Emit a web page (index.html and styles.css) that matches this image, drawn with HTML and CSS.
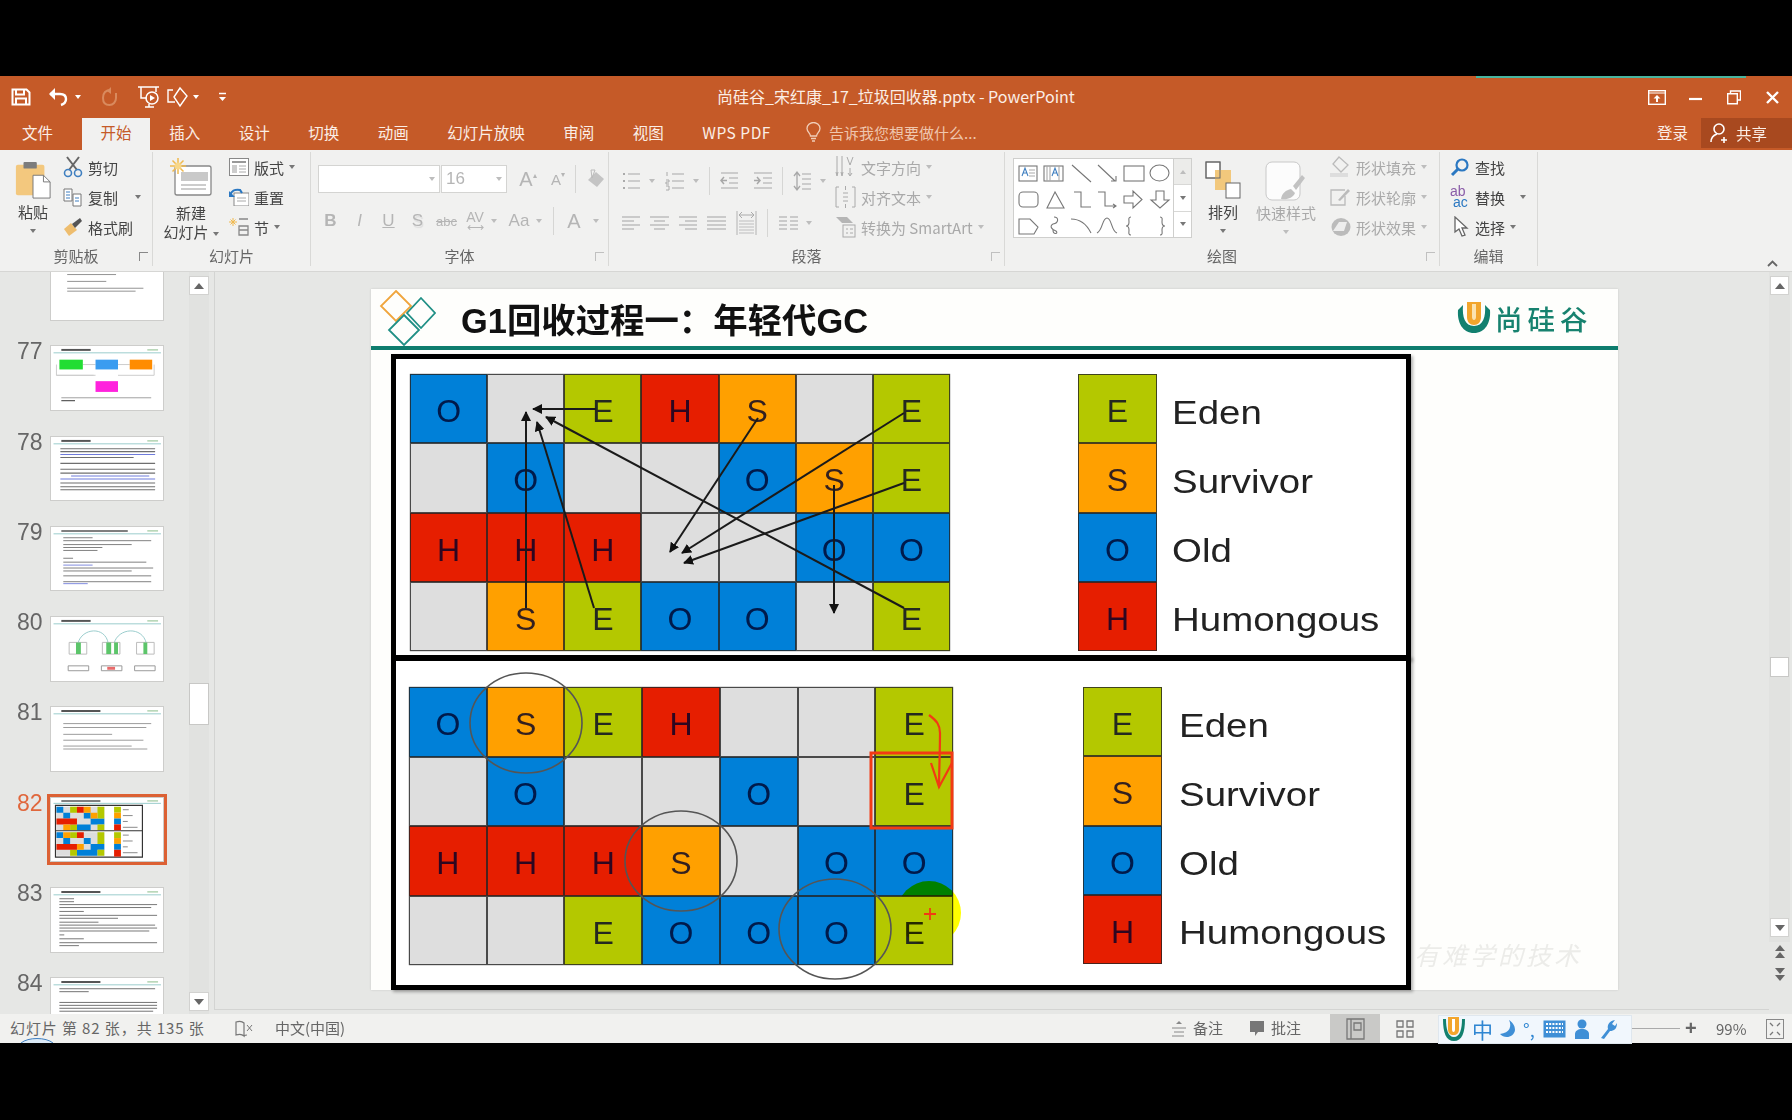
FILE: index.html
```html
<!DOCTYPE html>
<html lang="zh-CN">
<head>
    <meta charset="UTF-8">
    <meta name="viewport" content="width=device-width, initial-scale=1.0">
    <title>尚硅谷_宋红康_17_垃圾回收器.pptx - PowerPoint</title>
    <link rel="stylesheet" href="styles.css">
</head>
<body>
<div class="window">
    <div class="progress"></div>

    <!-- title bar -->
    <header class="titlebar">
        <div class="qat">
            <svg width="20" height="18" viewBox="0 0 20 18" class="q-save"><path d="M1.5 1.5h14l3 3v12h-17z M5 1.5v5h8v-5 M5 16.5v-6h10v6" fill="none" stroke="#fff" stroke-width="2"/></svg>
            <svg width="21" height="20" viewBox="0 0 21 20" class="q-undo"><path d="M2 7h10c4 0 6 2 6 5s-2 5-5 6" fill="none" stroke="#fff" stroke-width="2.4"/><path d="M7 1L1 7l6 6z" fill="#fff"/></svg>
            <i class="caret white"></i>
            <svg width="17" height="20" viewBox="0 0 17 20" class="q-redo"><path d="M10 3C5 3 2 6 2 11s3 7 6.500 7 6.500-3 6.500-7V6" fill="none" stroke="#d98a5e" stroke-width="2"/><path d="M10 0v7l-4-3z" fill="#d98a5e"/></svg>
            <svg width="23" height="24" viewBox="0 0 23 24" class="q-show"><path d="M1 2h21M4 2v11h6M19 2v5M8 22h9M12 19v3" fill="none" stroke="#fff" stroke-width="1.500"/><circle cx="15" cy="13" r="6" fill="none" stroke="#fff" stroke-width="1.500"/><path d="M13 10l5 3-5 3z" fill="#fff"/></svg>
            <svg width="21" height="22" viewBox="0 0 21 22" class="q-shape"><path d="M6 4H1v12h7 M7 11l6-9 7 8-7 10z" fill="none" stroke="#fff" stroke-width="1.400"/></svg>
            <i class="caret white"></i>
            <svg width="9" height="11" viewBox="0 0 9 11" class="q-more"><path d="M1 1.500h7" stroke="#fff" stroke-width="1.500"/><path d="M1 5h7L4.500 9z" fill="#fff"/></svg>
        </div>
        <div class="doc-title">尚硅谷_宋红康_17_垃圾回收器.pptx - PowerPoint</div>
        <div class="winctl">
            <svg width="18" height="15" viewBox="0 0 18 15"><rect x=".7" y=".7" width="16.600" height="13.600" fill="none" stroke="#fff" stroke-width="1.400"/><path d="M1 3h16" stroke="#fff"/><path d="M9 5l3.500 3.500H10V12H8V8.500H5.500z" fill="#fff"/></svg>
            <svg width="13" height="15" viewBox="0 0 13 15" class="w-min"><path d="M0 9h13" stroke="#fff" stroke-width="2.200"/></svg>
            <svg width="14" height="15" viewBox="0 0 14 15" class="w-max"><path d="M3.500 3V1h10v9h-3 M.7 3.700h9.600v10H.7z" fill="none" stroke="#fff" stroke-width="1.400"/></svg>
            <svg width="13" height="13" viewBox="0 0 13 13" class="w-close"><path d="M1 1l11 11M12 1L1 12" stroke="#fff" stroke-width="2.400"/></svg>
        </div>
    </header>

    <!-- tabs -->
    <nav class="tabs">
        <a class="tab tab-file">文件</a>
        <a class="tab active">开始</a>
        <a class="tab">插入</a>
        <a class="tab">设计</a>
        <a class="tab">切换</a>
        <a class="tab">动画</a>
        <a class="tab">幻灯片放映</a>
        <a class="tab">审阅</a>
        <a class="tab">视图</a>
        <a class="tab tab-wps">WPS PDF</a>
        <div class="tellme">
            <svg width="15" height="20" viewBox="0 0 15 20"><path d="M4.500 14c0-3-3.500-4-3.500-7.500a6.500 6 0 0 1 13 0C14 10 10.500 11 10.500 14zM5 16.500h5M6 19h3" fill="none" stroke="#f0cdb8" stroke-width="1.300"/></svg>
            <span>告诉我您想要做什么...</span>
        </div>
        <a class="login">登录</a>
        <a class="share">
            <svg width="20" height="22" viewBox="0 0 20 22"><circle cx="9" cy="7" r="5" fill="none" stroke="#fff" stroke-width="1.600"/><path d="M1 20c0-5 3-7 6-8M14 15v6M11 18h6" fill="none" stroke="#fff" stroke-width="1.600"/></svg>
            <span>共享</span>
        </a>
    </nav>

    <!-- ribbon -->
    <section class="ribbon">
        <div class="rgroup g-clip">
            <div class="rbody">
                <div class="big big-paste">
                    <svg width="38" height="38" viewBox="0 0 38 40"><rect x="1" y="4" width="30" height="32" rx="2" fill="#f3c87e"/><rect x="9" y="1" width="14" height="7" rx="1" fill="#7c7c7c"/><path d="M19 15h11l7 7v17H19z" fill="#fff" stroke="#777"/><path d="M30 15v7h7" fill="none" stroke="#777"/></svg>
                    <span>粘贴</span>
                    <i class="caret"></i>
                </div>
                <div class="smalls">
                    <div class="sm"><svg width="20" height="22" viewBox="0 0 20 22"><path d="M4 1l10 13M16 1L6 14" stroke="#666" stroke-width="2"/><circle cx="5" cy="17" r="3.500" fill="none" stroke="#3f7fc0" stroke-width="1.600"/><circle cx="15" cy="17" r="3.500" fill="none" stroke="#3f7fc0" stroke-width="1.600"/></svg><span>剪切</span></div>
                    <div class="sm"><svg width="20" height="20" viewBox="0 0 20 20"><path d="M1 2h8v12H1z M10 7h8v12h-8z" fill="#fff" stroke="#777"/><path d="M3 5h4M3 8h4M3 11h4M12 11h4M12 14h4" stroke="#3f7fc0"/></svg><span>复制</span><i class="caret sp-copy"></i></div>
                    <div class="sm"><svg width="20" height="20" viewBox="0 0 20 20"><path d="M1 12l7-6 6 7-8 6z" fill="#eebd6e"/><path d="M9 7l8-6 2 3-7 7z" fill="#555"/></svg><span>格式刷</span></div>
                </div>
            </div>
            <div class="rlabel">剪贴板<i class="launcher"></i></div>
        </div>

        <div class="rgroup g-slides">
            <div class="rbody">
                <div class="big big-new">
                    <svg width="42" height="38" viewBox="0 0 42 38"><rect x="5" y="8" width="36" height="29" rx="2" fill="#fff" stroke="#888" stroke-width="1.300"/><rect x="11" y="14" width="27" height="9" fill="#c9c9c9"/><path d="M11 27h25M11 31h25" stroke="#999"/><path d="M8 0v16M0 8h16M2.500 2.500l11 11M13.500 2.500l-11 11" stroke="#f0b94e" stroke-width="1.500"/><circle cx="8" cy="8" r="3.500" fill="#f8d788"/></svg>
                    <span>新建</span>
                    <span>幻灯片<i class="caret inline"></i></span>
                </div>
                <div class="smalls">
                    <div class="sm"><svg width="20" height="18" viewBox="0 0 20 18"><rect x=".5" y=".5" width="19" height="17" fill="#fff" stroke="#888"/><path d="M3 4h14" stroke="#999" stroke-width="2"/><rect x="3" y="7" width="5" height="8" fill="#ccc"/><path d="M10 8h7M10 11h7M10 14h7" stroke="#aaa"/></svg><span>版式</span><i class="caret"></i></div>
                    <div class="sm"><svg width="20" height="18" viewBox="0 0 20 18"><rect x="5" y="5" width="15" height="13" fill="#fff" stroke="#888"/><path d="M8 10h9M8 13h9" stroke="#aaa"/><path d="M1 8C2 3 6 1 11 2l2 3" fill="none" stroke="#2b78c2" stroke-width="2.200"/><path d="M0 3v6h6z" fill="#2b78c2"/></svg><span>重置</span></div>
                    <div class="sm"><svg width="20" height="20" viewBox="0 0 20 20"><path d="M10 2h9M10 9h9v9h-9zM10 13h9" fill="none" stroke="#888" stroke-width="1.300"/><path d="M4 1v8M0 5h8M1.500 2.500l5 5M6.500 2.500l-5 5" stroke="#f0b94e"/></svg><span>节</span><i class="caret"></i></div>
                </div>
            </div>
            <div class="rlabel">幻灯片</div>
        </div>

        <div class="rgroup g-font">
            <div class="rbody column">
                <div class="frow frow-1">
                    <div class="combo c-name"><i class="caret dim"></i></div>
                    <div class="combo c-size"><span>16</span><i class="caret dim"></i></div>
                    <span class="fbtn big-a">A<sup>▴</sup></span>
                    <span class="fbtn small-a">A<sup>▾</sup></span>
                    <i class="vsep"></i>
                    <svg width="19" height="20" viewBox="0 0 19 20" class="eraser"><path d="M2 11l8-8 8 7-7 8z" fill="#c4c4c4"/><path d="M5 1h4L6 9z" fill="none" stroke="#bbb"/></svg>
                </div>
                <div class="frow frow-2">
                    <b class="fbtn w29">B</b>
                    <em class="fbtn w29">I</em>
                    <u class="fbtn w29">U</u>
                    <s class="fbtn w29 shadow-s">S</s>
                    <span class="fbtn w29 abc">abc</span>
                    <span class="fbtn av">AV<i class="arrow-lr">⟷</i></span>
                    <i class="caret dim"></i>
                    <span class="fbtn aa">Aa</span>
                    <i class="caret dim"></i>
                    <i class="vsep"></i>
                    <span class="fbtn big-color">A</span>
                    <i class="caret dim"></i>
                </div>
            </div>
            <div class="rlabel">字体<i class="launcher dim"></i></div>
        </div>

        <div class="rgroup g-para">
            <div class="rbody">
                <div class="para-left">
                    <div class="prow prow-1">
                        <svg width="18" height="20" viewBox="0 0 18 20"><path d="M6 3h12M6 10h12M6 17h12" stroke="#c0c0c0" stroke-width="1.500"/><path d="M1 3h2M1 10h2M1 17h2" stroke="#aaa" stroke-width="2"/></svg><i class="caret dim"></i>
                        <svg width="19" height="20" viewBox="0 0 19 20"><path d="M7 3h12M7 10h12M7 17h12" stroke="#c0c0c0" stroke-width="1.500"/><path d="M2 1v4M1 9h3v2H1v2h3M1 15h3v4H1" fill="none" stroke="#aaa"/></svg><i class="caret dim"></i>
                        <i class="vsep"></i>
                        <svg width="18" height="20" viewBox="0 0 18 20"><path d="M1 2h17M9 7h9M9 12h9M1 17h17" stroke="#c0c0c0" stroke-width="1.500"/><path d="M1 9.500h6M4 6l-3 3.500L4 13" fill="none" stroke="#a8a8a8" stroke-width="1.500"/></svg>
                        <svg width="21" height="20" viewBox="0 0 21 20"><path d="M3 2h18M12 7h9M12 12h9M3 17h18" stroke="#c0c0c0" stroke-width="1.500"/><path d="M3 9.500h6M6 6l3 3.500L6 13" fill="none" stroke="#a8a8a8" stroke-width="1.500"/></svg>
                        <i class="vsep"></i>
                        <svg width="18" height="22" viewBox="0 0 18 22"><path d="M9 4h9M9 9h9M9 14h9M9 19h9" stroke="#c0c0c0" stroke-width="1.500"/><path d="M4 3v17M1 6l3-4 3 4M1 16l3 4 3-4" fill="none" stroke="#a8a8a8" stroke-width="1.300"/></svg><i class="caret dim"></i>
                    </div>
                    <div class="prow prow-2">
                        <svg width="18" height="16" viewBox="0 0 18 16"><path d="M0 2h18M0 6h12M0 10h18M0 14h12" stroke="#bdbdbd" stroke-width="1.500"/></svg>
                        <svg width="19" height="16" viewBox="0 0 19 16"><path d="M0 2h19M4 6h11M0 10h19M4 14h11" stroke="#bdbdbd" stroke-width="1.500"/></svg>
                        <svg width="18" height="16" viewBox="0 0 18 16"><path d="M0 2h18M6 6h12M0 10h18M6 14h12" stroke="#bdbdbd" stroke-width="1.500"/></svg>
                        <svg width="19" height="16" viewBox="0 0 19 16"><path d="M0 2h19M0 6h19M0 10h19M0 14h19" stroke="#bdbdbd" stroke-width="1.500"/></svg>
                        <svg width="21" height="24" viewBox="0 0 21 24"><path d="M1 0v24M20 0v24M3 10h15M3 13h15M3 16h15M3 19h15M3 22h15" stroke="#bdbdbd" stroke-width="1.200"/><path d="M3 4h15M6 1L3 4l3 3M15 1l3 3-3 3" fill="none" stroke="#aaa"/></svg>
                        <i class="vsep"></i>
                        <svg width="19" height="16" viewBox="0 0 19 16"><path d="M0 2h8M11 2h8M0 6h8M11 6h8M0 10h8M11 10h8M0 14h8M11 14h8" stroke="#bdbdbd" stroke-width="1.300"/></svg><i class="caret dim"></i>
                    </div>
                </div>
                <div class="smalls off">
                    <div class="sm"><svg width="21" height="24" viewBox="0 0 21 24"><path d="M2 1v18M7 1v18M1 17l1 4 1-4M6 17l1 4 1-4M12 2l3 8 3-8M15 13v7M13 18l2 3 2-3" fill="none" stroke="#aaa"/></svg><span>文字方向</span><i class="caret dim"></i></div>
                    <div class="sm"><svg width="21" height="24" viewBox="0 0 21 24"><path d="M4 2H1v20h3M17 2h3v20h-3M8 8h5M8 12h5M8 16h5M10.500 1v4M10.500 19v4" fill="none" stroke="#aaa"/></svg><span>对齐文本</span><i class="caret dim"></i></div>
                    <div class="sm"><svg width="21" height="22" viewBox="0 0 21 22"><path d="M1 1h11l6 6H7z" fill="#b5b5b5"/><rect x="8" y="9" width="12" height="12" fill="none" stroke="#aaa"/><path d="M11 13h2M15 13h3M11 17h2M15 17h3" stroke="#aaa"/></svg><span>转换为 SmartArt</span><i class="caret dim"></i></div>
                </div>
            </div>
            <div class="rlabel">段落<i class="launcher dim"></i></div>
        </div>

        <div class="rgroup g-draw">
            <div class="rbody">
                <div class="gallery">
                    <svg width="160" height="78" viewBox="0 0 160 78" fill="none" stroke="#777" stroke-width="1.100">
                        <rect x="5" y="7" width="18" height="15"/><path d="M15 11h6M15 14h6M15 17h6" stroke="#aaa"/>
                        <path d="M8 17l3-8 3 8M9 14h4" stroke="#3f7fc0"/>
                        <rect x="30" y="7" width="19" height="15"/><path d="M33 7v15M36 7v15M45 7v15" stroke="#aaa"/>
                        <path d="M38 17l3-8 3 8M39 14h4" stroke="#3f7fc0"/>
                        <path d="M58 6l19 17M84 6l17 16M97 22h5v-5"/>
                        <rect x="110" y="7" width="20" height="15"/><ellipse cx="145.500" cy="14" rx="9.500" ry="8"/>
                        <rect x="5" y="33" width="19" height="15" rx="4"/><path d="M41 33l-8 16h17z"/>
                        <path d="M60 33h7v15h10M84 33h7v14h10M99 45l3 2-3 2"/>
                        <path d="M110 37h9v-5l9 8.500-9 8.500v-5h-9zM142 32h8v9h5l-9 8-9-8h5z"/>
                        <path d="M5 60h11l8 8-4 7H5zM40 58c5 0 5 6-1 7-4 2-1 6 3 7 3 3-3 4-3-1M57 60c9 0 16 6 20 14M83 74c6-3 5-15 10-15s4 13 10 15"/>
                        <path d="M117 58c-3 0-2 3-2 5 0 3-1 4-3 4 2 0 3 1 3 4 0 2-1 5 2 5M146 58c3 0 2 3 2 5 0 3 1 4 3 4-2 0-3 1-3 4 0 2 1 5-2 5"/>
                    </svg>
                    <div class="gal-scroll">
                        <span class="gs-up"><i class="caret dim up"></i></span>
                        <span><i class="caret"></i></span>
                        <span class="gs-more"><i class="caret"></i></span>
                    </div>
                </div>
                <div class="big big-arrange">
                    <svg width="36" height="38" viewBox="0 0 36 38"><rect x="1" y="1" width="14" height="16" fill="#fff" stroke="#666"/><rect x="10" y="9" width="16" height="20" fill="#f2c87c"/><rect x="1" y="1" width="14" height="16" fill="none" stroke="#666"/><rect x="21" y="22" width="14" height="15" fill="#fff" stroke="#666"/></svg>
                    <span>排列</span>
                    <i class="caret"></i>
                </div>
                <div class="big big-style off">
                    <svg width="42" height="42" viewBox="0 0 42 42"><rect x="1" y="1" width="34" height="38" rx="6" fill="#fcfcfc" stroke="#c8c8c8"/><path d="M16 38c1-6 5-9 10-10l4 4c-2 5-8 7-14 6zM28 25l9-11 3 3-9 12z" fill="#c2c2c2"/></svg>
                    <span>快速样式</span>
                    <i class="caret dim"></i>
                </div>
                <div class="smalls off s-shape">
                    <div class="sm"><svg width="21" height="22" viewBox="0 0 21 22"><path d="M9 1l9 8-7 7-8-8z" fill="none" stroke="#bbb" stroke-width="1.300"/><path d="M0 19h18" stroke="#ddd" stroke-width="4"/></svg><span>形状填充</span><i class="caret dim"></i></div>
                    <div class="sm"><svg width="21" height="20" viewBox="0 0 21 20"><path d="M15 3H1v15h14V9" fill="none" stroke="#bbb" stroke-width="1.300"/><path d="M8 13l10-11 2 2-10 10z" fill="#bbb"/></svg><span>形状轮廓</span><i class="caret dim"></i></div>
                    <div class="sm"><svg width="21" height="20" viewBox="0 0 21 20"><ellipse cx="11" cy="10" rx="9.500" ry="9" fill="#bbb"/><path d="M3 14l6-9h8l-3 9z" fill="#ededed"/></svg><span>形状效果</span><i class="caret dim"></i></div>
                </div>
            </div>
            <div class="rlabel">绘图<i class="launcher dim"></i></div>
        </div>

        <div class="rgroup g-edit">
            <div class="rbody">
                <div class="smalls">
                    <div class="sm"><svg width="20" height="20" viewBox="0 0 20 20"><circle cx="12" cy="8" r="5.500" fill="none" stroke="#2b78c2" stroke-width="2.200"/><path d="M8 12l-6 6" stroke="#2b78c2" stroke-width="3"/></svg><span>查找</span></div>
                    <div class="sm"><span class="abac"><i>ab</i><i>ac</i></span><span>替换</span><i class="caret sp-rep"></i></div>
                    <div class="sm"><svg width="20" height="22" viewBox="0 0 20 22" class="cursor"><path d="M5 1v15l4-3 3 7 3-1-3-7h5z" fill="#fff" stroke="#666" stroke-width="1.300"/></svg><span>选择</span><i class="caret"></i></div>
                </div>
            </div>
            <div class="rlabel">编辑</div>
        </div>
        <svg class="collapse" width="11" height="7" viewBox="0 0 11 7"><path d="M1 6l4.500-4.500L10 6" fill="none" stroke="#666" stroke-width="1.800"/></svg>
    </section>

    <!-- workspace -->
    <div class="workspace">
        <aside class="thumbs">
            <div class="thumb-list">
                <div class="thumb"><span class="num"></span><div class="card">
                    <svg viewBox="0 0 114 65"><path d="M16 3h28M16 12h34M16 19h50M16 26h40M16 33h78M16 36h70" stroke="#333" stroke-width=".9" opacity=".6"/></svg>
                </div></div>
                <div class="thumb"><span class="num">77</span><div class="card">
                    <svg viewBox="0 0 114 65"><path d="M10 4h30" stroke="#555" stroke-width="2"/><path d="M2 7h110" stroke="#9cc" /><path d="M98 4h11" stroke="#8b8"/><path d="M5 19v11h38M105 19v11H68M45 30H5" fill="none" stroke="#ccc"/><path d="M32 19h13M68 19h12" stroke="#ccc"/><rect x="8" y="14" width="24" height="10" fill="#22dd33"/><rect x="45" y="14" width="23" height="10" fill="#3a9cf0"/><rect x="80" y="14" width="23" height="10" fill="#ff8c00"/><rect x="45" y="36" width="23" height="11" fill="#ff22dd"/><path d="M10 53h92" stroke="#777" stroke-width="1" opacity=".7"/><path d="M10 56h14" stroke="#333"/></svg>
                </div></div>
                <div class="thumb"><span class="num">78</span><div class="card">
                    <svg viewBox="0 0 114 65"><path d="M10 4h30" stroke="#555" stroke-width="2"/><path d="M2 7h110" stroke="#9cc"/><path d="M98 4h11" stroke="#8b8"/><path d="M9 12h97M9 15h97M9 21h75M9 27h97M9 33h97M9 37h97M9 47h97M9 51h97M9 54h97" stroke="#333" stroke-width="1.100" opacity=".7"/><path d="M9 18h97M20 40h80M9 43h97" stroke="#3344cc" stroke-width="1.100" opacity=".7"/></svg>
                </div></div>
                <div class="thumb"><span class="num">79</span><div class="card">
                    <svg viewBox="0 0 114 65"><path d="M10 4h68" stroke="#555" stroke-width="1.600"/><path d="M2 7h110" stroke="#9cc"/><path d="M98 4h11" stroke="#8b8"/><path d="M12 11h30M12 14h90M12 18h70M12 21h40M12 24h35M12 32h10M12 36h85M12 42h92M12 45h70M12 50h90M12 56h90" stroke="#333" stroke-width=".9" opacity=".7"/><path d="M12 39h30M12 58h25" stroke="#3344cc" stroke-width=".9" opacity=".7"/></svg>
                </div></div>
                <div class="thumb"><span class="num">80</span><div class="card">
                    <svg viewBox="0 0 114 65"><path d="M10 4h30" stroke="#555" stroke-width="2"/><path d="M2 7h110" stroke="#9cc"/><path d="M98 4h11" stroke="#8b8"/><path d="M27 27c4-16 28-18 31 0M64 27c4-16 29-18 33 0" fill="none" stroke="#9cc"/><path d="M18 26h18v12H18zM52 26h18v12H52zM87 26h18v12H87z" fill="#fff" stroke="#bbb"/><path d="M25 26h5v12h-5zM56 26h5v12h-5zM64 26h4v12h-4zM94 26h4v12h-4z" fill="#5cc56a"/><path d="M17 50h21v5H17zM51 50h21v5H51zM85 50h21v5H85z" fill="#fff" stroke="#999"/><path d="M57 51h8v3h-8z" fill="#e86a6a"/></svg>
                </div></div>
                <div class="thumb"><span class="num">81</span><div class="card">
                    <svg viewBox="0 0 114 65"><path d="M10 4h40" stroke="#555" stroke-width="2"/><path d="M2 7h110" stroke="#9cc"/><path d="M98 4h11" stroke="#8b8"/><path d="M12 17h90M12 21h85M12 28h50M12 34h82M12 40h70M12 43h86" stroke="#333" stroke-width=".9" opacity=".55"/></svg>
                </div></div>
                <div class="thumb selected"><span class="num">82</span><div class="card">
                    <svg viewBox="0 0 114 65">
                        <path d="M10 3h40" stroke="#555" stroke-width="1.600"/><path d="M2 5.500h110" stroke="#9cc"/><path d="M98 3h11" stroke="#8b8"/>
                        <g transform="translate(0 -2)">
                            <path d="M5 11h49v24H5zM5 37h49v24H5z" fill="#ddd"/>
                            <path d="M5 11h7v6H5zM12 17h7v6h-7zM33 17h7v6h-7zM40 23h14v6H40zM26 29h14v6H26zM5 37h7v6H5zM12 43h7v6h-7zM33 43h7v6h-7zM40 49h14v6H40zM26 55h21v6H26z" fill="#0080d8"/>
                            <path d="M19 11h7v6h-7zM47 11h7v12h-7zM19 29h7v6h-7zM47 29h7v6h-7zM19 37h7v6h-7zM47 37h7v12h-7zM19 55h7v6h-7zM47 55h7v6h-7z" fill="#b4c800"/>
                            <path d="M26 11h7v6h-7zM5 23h21v6H5zM26 37h7v6h-7zM5 49h21v6H5z" fill="#e61e00"/>
                            <path d="M33 11h7v6h-7zM40 17h7v6h-7zM12 29h7v6h-7zM12 37h7v6h-7zM26 49h7v6h-7z" fill="#ffa000"/>
                        </g>
                        <path d="M4 7.500h89v26H4zM4 33.500h89v27H4z" fill="none" stroke="#333" stroke-width="1.200"/>
                        <path d="M64 9h7v6h-7z" fill="#b4c800"/><path d="M64 15h7v6h-7z" fill="#ffa000"/><path d="M64 21h7v6h-7z" fill="#0080d8"/><path d="M64 27h7v6h-7z" fill="#e61e00"/>
                        <path d="M64 35h7v6h-7z" fill="#b4c800"/><path d="M64 41h7v6h-7z" fill="#ffa000"/><path d="M64 47h7v6h-7z" fill="#0080d8"/><path d="M64 53h7v7h-7z" fill="#e61e00"/>
                        <path d="M73 12h6M73 18h10M73 24h5M73 30h15M73 38h6M73 44h10M73 50h5M73 56h15" stroke="#888"/>
                    </svg>
                </div></div>
                <div class="thumb"><span class="num">83</span><div class="card">
                    <svg viewBox="0 0 114 65"><path d="M10 4h40" stroke="#555" stroke-width="2"/><path d="M2 7h110" stroke="#9cc"/><path d="M98 4h11" stroke="#8b8"/><path d="M8 11h15M8 14h15M8 17h100M8 20h94M8 24h25M8 28h100M8 31h60M8 35h40M8 38h98M8 41h100M8 44h92M8 48h5M8 52h25M8 56h100M8 59h20" stroke="#333" stroke-width=".9" opacity=".75"/></svg>
                </div></div>
                <div class="thumb"><span class="num">84</span><div class="card">
                    <svg viewBox="0 0 114 65"><path d="M10 4h40" stroke="#555" stroke-width="2"/><path d="M2 7h110" stroke="#9cc"/><path d="M98 4h11" stroke="#8b8"/><path d="M8 11h98M8 14h30M8 25h100M8 28h100M8 31h100M8 34h96" stroke="#333" stroke-width="1" opacity=".7"/></svg>
                </div></div>
            </div>
        </aside>
        <div class="thumb-scroll">
            <span class="sbtn"><i class="caret dark up"></i></span>
            <span class="sthumb"></span>
            <span class="sbtn"><i class="caret dark"></i></span>
        </div>

        <main class="stage">
            <article class="slide">
                <div class="slide-head">
                    <svg class="diamonds" width="60" height="56" viewBox="0 0 60 56" fill="none" stroke-width="1.800"><path d="M20 1l15 15-15 15L5 16z" stroke="#f0a53c"/><path d="M45 8l14 15-14 15-14-15z" stroke="#1f8f85"/><path d="M28 25l15 15-15 15-15-15z" stroke="#1f8f85"/></svg>
                    <h1>G1回收过程一<span class="punc">：</span>年轻代GC</h1>
                    <svg class="logo" width="34" height="33" viewBox="0 0 34 33"><path d="M1 9c-1 13 5 23 16 23s17-10 16-23l-5-5c1 12-2 21-11 21S5 16 6 4z" fill="#12806f"/><path d="M10 1h14v15c0 5-3 8-7 8s-7-3-7-8z" fill="#f2a52c"/><path d="M15 3h4v13c0 2-1 3-2 3s-2-1-2-3z" fill="#fbe3b0"/></svg>
                    <span class="brand">尚硅谷</span>
                </div>

                <div class="diagram">
                    <section class="panel panel-top">
                        <div class="grid">
                            <div class="cell blue">O</div><div class="cell grey"></div><div class="cell green">E</div><div class="cell red">H</div><div class="cell orange">S</div><div class="cell grey"></div><div class="cell green">E</div>
                            <div class="cell grey"></div><div class="cell blue">O</div><div class="cell grey"></div><div class="cell grey"></div><div class="cell blue">O</div><div class="cell orange">S</div><div class="cell green">E</div>
                            <div class="cell red">H</div><div class="cell red">H</div><div class="cell red">H</div><div class="cell grey"></div><div class="cell grey"></div><div class="cell blue">O</div><div class="cell blue">O</div>
                            <div class="cell grey"></div><div class="cell orange">S</div><div class="cell green">E</div><div class="cell blue">O</div><div class="cell blue">O</div><div class="cell grey"></div><div class="cell green">E</div>
                            <svg class="overlay" viewBox="0 0 540 277">
                                <defs><marker id="head" markerWidth="11" markerHeight="10" refX="9" refY="5" orient="auto" markerUnits="userSpaceOnUse"><path d="M0 0l10 5-10 5z" fill="#111"/></marker></defs>
                                <g stroke="#1a1a1a" stroke-width="2">
                                    <path d="M186 35L123 35" marker-end="url(#head)"/>
                                    <path d="M116 234L116 38" marker-end="url(#head)"/>
                                    <path d="M184 234L127 48" marker-end="url(#head)"/>
                                    <path d="M494 234L136 43" marker-end="url(#head)"/>
                                    <path d="M348 44L260 178" marker-end="url(#head)"/>
                                    <path d="M494 39L272 179" marker-end="url(#head)"/>
                                    <path d="M494 109L274 189" marker-end="url(#head)"/>
                                    <path d="M424 111L424 239" marker-end="url(#head)"/>
                                </g>
                            </svg>
                        </div>
                        <div class="legend">
                            <div class="lrow"><div class="cell green">E</div><span>Eden</span></div>
                            <div class="lrow"><div class="cell orange">S</div><span>Survivor</span></div>
                            <div class="lrow"><div class="cell blue">O</div><span>Old</span></div>
                            <div class="lrow"><div class="cell red">H</div><span>Humongous</span></div>
                        </div>
                    </section>

                    <section class="panel panel-bottom">
                        <div class="grid">
                            <div class="cell blue">O</div><div class="cell orange">S</div><div class="cell green">E</div><div class="cell red">H</div><div class="cell grey"></div><div class="cell grey"></div><div class="cell green">E</div>
                            <div class="cell grey"></div><div class="cell blue">O</div><div class="cell grey"></div><div class="cell grey"></div><div class="cell blue">O</div><div class="cell grey"></div><div class="cell green">E</div>
                            <div class="cell red">H</div><div class="cell red">H</div><div class="cell red">H</div><div class="cell orange">S</div><div class="cell grey"></div><div class="cell blue">O</div><div class="cell blue">O</div>
                            <div class="cell grey"></div><div class="cell grey"></div><div class="cell green">E</div><div class="cell blue">O</div><div class="cell blue">O</div><div class="cell blue">O</div><div class="cell green">E</div>
                            <svg class="overlay" viewBox="0 0 544 278">
                                <circle class="pointer" cx="520" cy="226" r="32"/>
                                <g fill="none" stroke="#555" stroke-width="1.600">
                                    <ellipse cx="117" cy="36" rx="56" ry="50"/>
                                    <ellipse cx="272" cy="174" rx="56" ry="50"/>
                                    <ellipse cx="426" cy="242" rx="56" ry="50"/>
                                </g>
                                <rect x="462" y="66" width="81" height="75" fill="none" stroke="#f23a14" stroke-width="3"/>
                                <path d="M520 28c8 6 11 10 11 18 0 20-1 40-1 54M522 76l8 24 13-24" fill="none" stroke="#f23a14" stroke-width="2.200"/>
                                <path d="M521 221v12M515 227h12" stroke="#f23a14" stroke-width="1.800"/>
                            </svg>
                        </div>
                        <div class="legend">
                            <div class="lrow"><div class="cell green">E</div><span>Eden</span></div>
                            <div class="lrow"><div class="cell orange">S</div><span>Survivor</span></div>
                            <div class="lrow"><div class="cell blue">O</div><span>Old</span></div>
                            <div class="lrow"><div class="cell red">H</div><span>Humongous</span></div>
                        </div>
                    </section>
                </div>
                <div class="watermark">有难学的技术</div>
            </article>
        </main>

        <div class="page-scroll">
            <span class="sbtn"><i class="caret dark up"></i></span>
            <span class="pthumb"></span>
            <span class="sbtn pdown"><i class="caret dark"></i></span>
            <span class="pageup"><i class="caret dark up"></i><i class="caret dark up"></i></span>
            <span class="pagedown"><i class="caret dark"></i><i class="caret dark"></i></span>
        </div>
    </div>

    <!-- status bar -->
    <footer class="status">
        <svg class="arc" width="34" height="7" viewBox="0 0 34 7"><path d="M1 7C8 1 26 1 33 7" fill="#dbe9f6" stroke="#3f7fc0"/></svg>
        <span class="st-count">幻灯片 第 82 张，共 135 张</span>
        <svg class="st-book" width="18" height="18" viewBox="0 0 18 18"><path d="M9 3C7 1 4 1 1 2v13c3-1 6-1 8 1v-13zM9 16c1-1 2-1 3-1" fill="none" stroke="#777" stroke-width="1.200"/><path d="M12 5l5 6M17 5l-5 6" stroke="#777"/></svg>
        <span class="st-lang">中文(中国)</span>
        <div class="st-right">
            <svg width="16" height="18" viewBox="0 0 16 18"><path d="M5 4l3-3 3 3z" fill="#888"/><path d="M1 8h14M3 12h10M1 16h12" stroke="#888"/></svg>
            <span class="st-note">备注</span>
            <svg class="st-comm" width="16" height="18" viewBox="0 0 16 18"><path d="M1 1h14v11H9l-3 4v-4H1z" fill="#777"/></svg>
            <span class="st-note">批注</span>
            <span class="view-on"><svg width="19" height="22" viewBox="0 0 19 22"><path d="M1 1h17v20H1zM5 1v20M8 5h7v7H8z" fill="none" stroke="#777" stroke-width="1.300"/></svg></span>
            <svg class="view-sorter" width="18" height="18" viewBox="0 0 18 18"><path d="M1 1h6v6H1zM11 1h6v6h-6zM1 11h6v6H1zM11 11h6v6h-6z" fill="none" stroke="#777" stroke-width="1.300"/></svg>
            <div class="ime">
                <svg width="24" height="26" viewBox="0 0 24 26"><path d="M1 3c0 14 3 22 11 22s11-8 11-22h-3c0 10-2 18-8 18S4 13 4 3z" fill="#12806f"/><path d="M6 1h11v12c0 4-2 6-5.500 6S6 17 6 13z" fill="#f2a52c"/><path d="M10 3h3v10c0 2-.5 3-1.500 3S10 15 10 13z" fill="#fff"/></svg>
                <span class="ime-zh">中</span>
                <svg width="17" height="20" viewBox="0 0 17 20"><path d="M10 1c3 6 1 13-9 14 4 5 14 4 15-4 0-5-3-8-6-10z" fill="#3f8fd6"/></svg>
                <span class="ime-punc">°,</span>
                <svg width="23" height="18" viewBox="0 0 23 18"><rect x=".5" y=".5" width="22" height="17" fill="#3f8fd6"/><path d="M3 4h17M3 8h17M3 12h17" stroke="#fff" stroke-width="1.800" stroke-dasharray="2 1.200"/></svg>
                <svg class="ime-user" width="14" height="20" viewBox="0 0 14 20"><circle cx="7" cy="5" r="4.500" fill="#3f8fd6"/><path d="M0 20v-5c0-3 3-5 7-5s7 2 7 5v5z" fill="#3f8fd6"/></svg>
                <svg class="ime-tool" width="18" height="20" viewBox="0 0 18 20"><path d="M2 19l7-9c-1-4 1-8 7-9l-3 4 3 2 2-3c0 6-3 8-7 8l-6 8z" fill="#3f8fd6"/></svg>
            </div>
            <i class="zoom-line"></i>
            <b class="zoom-plus">+</b>
            <span class="zoom-val">99%</span>
            <svg width="18" height="20" viewBox="0 0 18 20"><rect x=".5" y=".5" width="17" height="19" fill="none" stroke="#888"/><path d="M4 4l3 3M14 4l-3 3M4 16l3-3M14 16l-3-3" stroke="#777" stroke-width="1.300"/></svg>
        </div>
    </footer>
</div>
</body>
</html>
```

FILE: styles.css
```css
* {
    box-sizing: border-box;
}
html, body {
    margin: 0;
    height: 1120px;
    overflow: hidden;
    background-color: #000;
}
body {
    padding-top: 76px;
    font-family: "Liberation Sans", "Noto Sans CJK SC", sans-serif;
    color: #444;
}
.window {
    position: relative;
    width: 1792px;
    height: 967px;
    display: flex;
    flex-direction: column;
    filter: blur(0.45px);
}
.progress {
    position: absolute;
    top: 0;
    left: 1476px;
    width: 270px;
    height: 2px;
    background-color: #48b5a0;
}

/* title bar */
.titlebar {
    height: 42px;
    background-color: #c55a28;
    display: grid;
    grid-template-columns: 1fr auto 1fr;
    align-items: center;
    color: #fff;
}
.qat {
    display: flex;
    align-items: center;
}
.qat svg {
    flex: none;
}
.q-save { margin-left: 11px; }
.q-undo { margin-left: 17px; margin-right: 6px; }
.q-redo { margin-left: 20px; }
.q-show { margin-left: 19px; }
.q-shape { margin-left: 7px; margin-right: 5px; }
.q-more { margin-left: 19px; }
.doc-title {
    padding-bottom: 2px;
    font-size: 16px;
    font-family: "Noto Sans CJK SC", sans-serif;
    color: #fbeee6;
}
.winctl {
    display: flex;
    align-items: center;
    justify-content: flex-end;
    padding-right: 13px;
}
.w-min { margin-left: 23px; }
.w-max { margin-left: 25px; }
.w-close { margin-left: 25px; }

/* tabs */
.tabs {
    height: 32px;
    background-color: #c55a28;
    display: flex;
    align-items: stretch;
    font-family: "Noto Sans CJK SC", sans-serif;
    font-size: 15.5px;
    color: #fbeee6;
}
.tab {
    padding: 0 19.25px 4px;
    display: flex;
    align-items: center;
    white-space: nowrap;
}
.tab-file {
    width: 82px;
    padding: 0 0 4px 22px;
}
.tab.active {
    width: 68px;
    justify-content: center;
    padding: 0 0 4px;
    background-color: #f1f1f0;
    color: #c55a28;
}
.tab-wps {
    letter-spacing: 0.5px;
}
.tellme {
    margin-left: 16px;
    padding-bottom: 4px;
    display: flex;
    align-items: center;
    gap: 8px;
    color: #efc6ae;
    font-size: 15px;
}
.login {
    margin-left: auto;
    display: flex;
    align-items: center;
    padding: 0 13px 4px 0;
}
.share {
    width: 91px;
    height: 30px;
    background-color: #a8491f;
    display: flex;
    align-items: center;
    gap: 6px;
    padding-left: 9px;
}

/* ribbon */
.ribbon {
    position: relative;
    height: 122px;
    background-color: #f1f1f0;
    border-bottom: 1px solid #d6d6d4;
    display: flex;
    padding-top: 2px;
    font-family: "Noto Sans CJK SC", sans-serif;
    font-size: 15px;
}
.rgroup {
    height: 114px;
    border-right: 1px solid #d9d9d7;
    display: flex;
    flex-direction: column;
}
.rbody {
    height: 97px;
    display: flex;
}
.rbody.column {
    flex-direction: column;
}
.rlabel {
    position: relative;
    height: 21px;
    text-align: center;
    font-size: 15px;
    line-height: 20px;
    color: #666;
}
.launcher {
    position: absolute;
    right: 4px;
    bottom: 5px;
    width: 9px;
    height: 9px;
    border-left: 1px solid #888;
    border-top: 1px solid #888;
}
.launcher.dim { border-color: #c0c0c0; }
.g-clip { width: 153px; }
.g-slides { width: 158px; }
.g-font { width: 298px; }
.g-para { width: 396px; }
.g-draw { width: 435px; }
.g-edit { width: 98px; }

.caret {
    display: inline-block;
    width: 0;
    height: 0;
    border-left: 3.5px solid transparent;
    border-right: 3.5px solid transparent;
    border-top: 4px solid #777;
    flex: none;
}
.caret.white { border-top-color: #fff; }
.caret.dim { border-top-color: #bdbdbd; }
.caret.dark { border-left-width: 5px; border-right-width: 5px; border-top: 6px solid #666; }
.caret.up { transform: rotate(180deg); }
.caret.inline { margin-left: 4px; vertical-align: middle; }

.big {
    display: flex;
    flex-direction: column;
    align-items: center;
    line-height: 19px;
    white-space: nowrap;
    flex: none;
}
.big-paste { width: 60px; padding-top: 9px; margin-left: 3px; }
.big-paste span { margin-top: 3px; }
.big-paste .caret { margin-top: 8px; }
.big-new { width: 76px; padding-top: 6px; }
.big-new span:first-of-type { margin-top: 7px; }
.big-arrange { width: 36px; margin-left: 13px; padding-top: 9px; }
.big-arrange span { margin-top: 3px; }
.big-arrange .caret { margin-top: 8px; }
.big-style { width: 70px; margin-left: 10px; padding-top: 9px; }
.big-style span { margin-top: 0; }
.big-style .caret { margin-top: 8px; }
.off { color: #a9a9a9; }

.smalls {
    display: flex;
    flex-direction: column;
    flex: none;
}
.sm {
    height: 30px;
    display: flex;
    align-items: center;
    gap: 5px;
    white-space: nowrap;
}
.sm svg {
    flex: none;
}
.sp-copy { margin-left: 12px; }
.sp-rep { margin-left: 10px; }
.s-shape { margin-left: 9px; }

/* font group */
.frow {
    display: flex;
    align-items: center;
    color: #b5b5b5;
}
.frow-1 {
    height: 44px;
    padding-left: 7px;
    padding-top: 10px;
}
.frow-2 {
    height: 42px;
    padding-left: 5px;
    padding-top: 8px;
}
.combo {
    height: 28px;
    background-color: #fff;
    border: 1px solid #d4d4d2;
    display: flex;
    align-items: center;
    justify-content: flex-end;
    padding-right: 4px;
}
.combo .caret { margin-left: auto; }
.c-name { width: 122px; }
.c-size {
    width: 66px;
    margin-left: 1px;
    font-family: "Liberation Sans", sans-serif;
    font-size: 17px;
    padding-left: 4px;
    justify-content: flex-start;
}
.fbtn {
    font-family: "Liberation Sans", sans-serif;
    text-align: center;
    flex: none;
    font-size: 17px;
}
.fbtn sup {
    font-size: 8px;
    vertical-align: 8px;
    line-height: 0;
}
.big-a { width: 28px; margin-left: 7px; font-size: 20px; }
.small-a { width: 26px; margin-left: 3px; font-size: 15px; }
.vsep {
    display: block;
    width: 1px;
    height: 28px;
    background-color: #d6d6d4;
    flex: none;
}
.frow-1 .vsep { margin-left: 4px; }
.eraser { margin-left: 10px; }
.w29 { width: 29px; }
.shadow-s { text-decoration: none; text-shadow: 1px 2px 1px #ddd; }
.abc { font-size: 13px; text-decoration: line-through; }
.av { width: 28px; font-size: 14px; line-height: 12px; display: flex; flex-direction: column; align-items: center; }
.arrow-lr { font-size: 12px; font-style: normal; line-height: 8px; }
.aa { width: 30px; margin-left: 7px; }
.frow-2 .caret { margin-left: 2px; }
.frow-2 .vsep { margin-left: 11px; }
.big-color { width: 34px; margin-left: 3px; font-size: 20px; }

/* paragraph group */
.para-left {
    width: 226px;
    flex: none;
    padding-left: 13px;
}
.prow {
    display: flex;
    align-items: center;
}
.prow svg { flex: none; }
.prow-1 { height: 49px; padding-top: 9px; }
.prow-2 { height: 36px; margin-top: 4px; }
.prow-1 .caret { margin-left: 9px; margin-right: 10px; }
.prow-1 .vsep { margin-right: 10px; margin-left: 0; }
.prow-1 svg + svg { margin-left: 13px; margin-right: 10px; }
.prow-2 svg { margin-right: 10px; }
.prow-2 .vsep { margin-right: 11px; }
.prow-2 .caret { margin-left: -2px; }

/* drawing group */
.gallery {
    width: 179px;
    height: 80px;
    margin-left: 8px;
    margin-top: 6px;
    background-color: #fff;
    border: 1px solid #cfcfcd;
    display: flex;
    flex: none;
}
.gallery svg { flex: none; margin-right: -1px; }
.gal-scroll {
    width: 19px;
    display: flex;
    flex-direction: column;
    border-left: 1px solid #cfcfcd;
}
.gal-scroll span {
    flex: 1;
    display: flex;
    align-items: center;
    justify-content: center;
    border-bottom: 1px solid #d8d8d6;
}
.gal-scroll span:last-child { border-bottom: none; }
.gs-up { background-color: #ececea; }

/* edit group */
.g-edit .smalls { margin-left: 10px; }
.abac {
    width: 20px;
    font-family: "Liberation Sans", sans-serif;
    font-size: 14px;
    line-height: 11px;
    display: flex;
    flex-direction: column;
}
.abac i { font-style: normal; color: #8a5ca8; }
.abac i + i { color: #2b78c2; margin-left: 3px; }
.collapse {
    position: absolute;
    right: 14px;
    bottom: 4px;
}

/* workspace */
.workspace {
    height: 742px;
    display: flex;
    background-color: #e6e7e5;
    overflow: hidden;
}
.thumbs {
    width: 189px;
    flex: none;
    overflow: hidden;
}
.thumb-list {
    margin-top: -17px;
}
.thumb {
    height: 90.3px;
    display: flex;
    align-items: flex-start;
}
.num {
    width: 49.5px;
    padding-left: 17px;
    margin-top: -7px;
    font-size: 23px;
    line-height: 26px;
    color: #666;
    flex: none;
}
.card {
    width: 114.500px;
    height: 65.500px;
    background-color: #fff;
    border: 1px solid #cdcdcb;
    flex: none;
}
.card svg {
    display: block;
    width: 100%;
    height: 100%;
}
.selected .num { color: #e0673c; }
.selected .card {
    outline: 3.500px solid #dc6134;
    outline-offset: 0;
}
.thumb-scroll {
    width: 20px;
    height: 100%;
    flex: none;
    background-color: #e1e2e0;
    padding-top: 4px;
    display: flex;
    flex-direction: column;
}
.sbtn {
    height: 19px;
    background-color: #fff;
    border: 1px solid #d2d2d0;
    display: flex;
    align-items: center;
    justify-content: center;
    flex: none;
}
.sthumb {
    height: 42px;
    margin-top: 388px;
    margin-bottom: 267px;
    background-color: #fff;
    border: 1px solid #c8c8c6;
    flex: none;
}
.stage {
    width: 1556px;
    height: 738px;
    margin-left: 5px;
    border-left: 1px solid #d3d4d2;
    border-bottom: 1px solid #d3d4d2;
    padding: 17px 0 0 156px;
    flex: none;
}

/* slide */
.slide {
    position: relative;
    width: 1247px;
    height: 701px;
    background-color: #fefefc;
    box-shadow: 0 0 2px #c8c8c6;
    display: flex;
    flex-direction: column;
}
.slide-head {
    height: 61px;
    border-bottom: 4px solid #0e7d6e;
    display: flex;
    align-items: center;
    flex: none;
}
.diamonds {
    margin-left: 5px;
    flex: none;
}
.slide-head h1 {
    margin: 0 0 0 25px;
    font-size: 34.400px;
    font-family: "Liberation Sans", "Noto Sans CJK SC", sans-serif;
    font-weight: 700;
    color: #111;
    white-space: nowrap;
}
.punc {
    font-family: "Noto Sans CJK TC", sans-serif;
}
.logo {
    margin-left: auto;
    flex: none;
}
.brand {
    width: 127px;
    padding-left: 4px;
    font-family: "Noto Sans CJK SC", sans-serif;
    font-size: 27.500px;
    font-weight: 500;
    letter-spacing: 5px;
    color: #17826f;
    white-space: nowrap;
}
.diagram {
    margin: 4px 0 0 20px;
    width: 1020px;
}
.panel {
    display: flex;
    border: 5px solid #000;
    background-color: #fff;
    box-shadow: 2px 2px 3px rgba(0, 0, 0, 0.3);
}
.panel-top {
    height: 306px;
    padding: 15px 0 0 14px;
}
.panel-bottom {
    height: 334px;
    margin-top: -4px;
    padding: 26px 0 0 13px;
}
.grid {
    position: relative;
    width: 540px;
    height: 277px;
    display: grid;
    grid-template-columns: repeat(7, 1fr);
    grid-template-rows: repeat(4, 1fr);
    flex: none;
    box-shadow: 0 0 1px #333;
}
.panel-bottom .grid {
    width: 544px;
    height: 278px;
}
.cell {
    display: flex;
    align-items: center;
    justify-content: center;
    border: 1px solid rgba(35, 35, 35, 0.8);
    padding-top: 6px;
    font-size: 32px;
    color: rgba(0, 0, 40, 0.8);
}
.blue { background-color: #0080d8; }
.grey { background-color: #dedede; }
.green { background-color: #b4c800; }
.orange { background-color: #ffa000; }
.red { background-color: #e61e00; }
.overlay {
    position: absolute;
    top: 0;
    left: 0;
    width: 100%;
    height: 100%;
    overflow: visible;
}
.pointer {
    fill: #ffff00;
    mix-blend-mode: multiply;
}
.legend {
    margin-left: 128px;
    width: 300px;
    display: grid;
    grid-template-rows: repeat(4, 69.25px);
}
.panel-bottom .legend {
    margin-left: 130px;
}
.lrow {
    display: flex;
    align-items: stretch;
}
.lrow .cell {
    width: 79px;
    flex: none;
}
.lrow span {
    margin-left: 15px;
    padding-top: 8px;
    display: flex;
    align-items: center;
    font-size: 33px;
    color: #222;
    transform: scaleX(1.165);
    transform-origin: left center;
    white-space: nowrap;
}
.panel-bottom .lrow span {
    margin-left: 17px;
}
.watermark {
    position: absolute;
    right: 36px;
    bottom: 18px;
    font-family: "Noto Sans CJK SC", sans-serif;
    font-size: 25px;
    font-style: italic;
    letter-spacing: 3px;
    color: #ecece9;
}

/* right scrollbar */
.page-scroll {
    width: 21px;
    flex: none;
    margin-left: -1px;
    padding-top: 4px;
    background-color: #e1e2e0;
    display: flex;
    flex-direction: column;
    align-items: center;
}
.page-scroll .sbtn { width: 19px; }
.pthumb {
    width: 19px;
    height: 20px;
    margin-top: 362px;
    background-color: #fff;
    border: 1px solid #c8c8c6;
    flex: none;
}
.pdown { margin-top: 241px; }
.pageup, .pagedown {
    display: flex;
    flex-direction: column;
    align-items: center;
    gap: 1px;
    background-color: #e6e7e5;
    width: 21px;
}
.pageup { margin-top: 5px; padding-top: 3px; padding-bottom: 5px; }
.pagedown { padding-top: 5px; padding-bottom: 40px; }

/* status bar */
.status {
    position: relative;
    height: 29px;
    background-color: #f1f1ef;
    display: flex;
    align-items: center;
    font-family: "Noto Sans CJK SC", sans-serif;
    font-size: 15px;
    color: #666;
}
.arc {
    position: absolute;
    left: 20px;
    bottom: 0;
}
.st-count {
    margin-left: 10px;
    width: 225px;
    padding-bottom: 2px;
    letter-spacing: 0.9px;
    white-space: nowrap;
}
.st-book {
    flex: none;
}
.st-lang {
    margin-left: 22px;
    padding-bottom: 2px;
}
.st-right {
    margin-left: auto;
    display: flex;
    align-items: center;
    height: 100%;
}
.st-right svg { flex: none; }
.st-note { margin-left: 6px; padding-bottom: 2px; }
.st-comm { margin-left: 26px; }
.view-on {
    margin-left: 29px;
    width: 50px;
    height: 100%;
    background-color: #c9c9c7;
    display: flex;
    align-items: center;
    justify-content: center;
}
.view-sorter { margin-left: 16px; }
.ime {
    margin-left: 24px;
    width: 194px;
    height: 29px;
    margin-top: 1px;
    background-color: #f1f7fd;
    border: 1px solid #dfe7ee;
    display: flex;
    align-items: center;
    gap: 6px;
    padding-left: 3px;
    color: #2f86d2;
}
.ime-zh { font-size: 21px; line-height: 1; }
.ime-punc { font-size: 18px; width: 13px; margin: 0 1px; line-height: 1; }
.ime-user { margin-left: 3px; }
.ime-tool { margin-left: 4px; }
.zoom-line {
    display: block;
    width: 48px;
    height: 1px;
    background-color: #aaa;
    flex: none;
}
.zoom-plus {
    margin-left: 5px;
    font-size: 20px;
    font-family: "Liberation Sans", sans-serif;
    width: 12px;
}
.zoom-val {
    margin-left: 17px;
    width: 52px;
    padding-left: 2px;
    font-size: 15px;
}
.st-right > svg:last-child { margin-right: 8px; }
```
